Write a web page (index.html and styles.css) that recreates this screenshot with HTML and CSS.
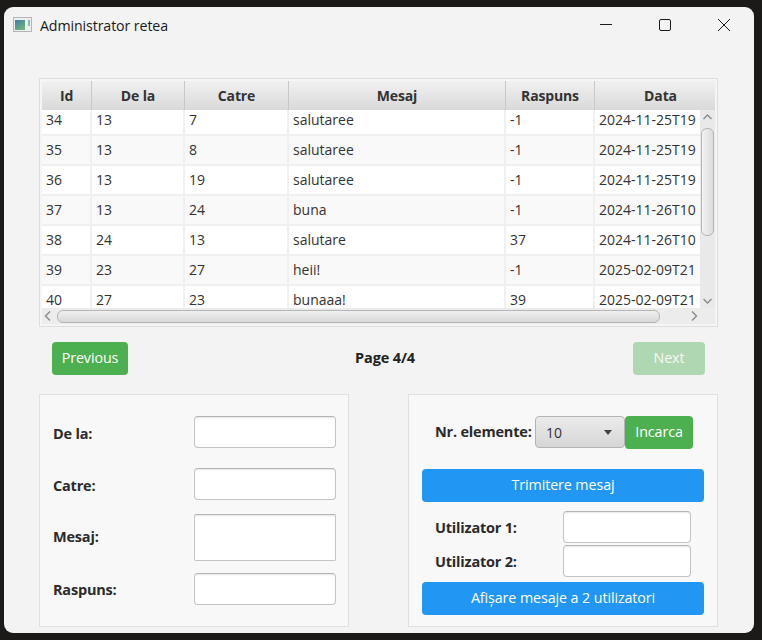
FILE: index.html
```html
<!DOCTYPE html>
<html lang="ro">
<head>
    <meta charset="UTF-8">
    <meta name="viewport" content="width=device-width, initial-scale=1.0">
    <title>Administrator retea</title>
    <link rel="stylesheet" href="styles.css">
</head>
<body>
    <div class="window">
        <div class="titlebar">
            <svg class="app-icon" width="20" height="16" viewBox="0 0 20 16">
                <defs>
                    <linearGradient id="pane" x1="0" y1="0" x2="0.6" y2="1">
                        <stop offset="0" stop-color="#3f7fa0"/>
                        <stop offset="1" stop-color="#6fb07f"/>
                    </linearGradient>
                </defs>
                <rect x="0.5" y="0.5" width="18" height="14" fill="#eceeef" stroke="#b3b6b9"/>
                <rect x="2" y="3" width="10" height="10" fill="url(#pane)"/>
                <rect x="15" y="3" width="2" height="6" fill="#8fb8b5"/>
            </svg>
            <span class="title">Administrator retea</span>
            <div class="controls">
                <svg class="ctl-min" width="14" height="14" viewBox="0 0 14 14"><path d="M1 6.5h12" stroke="#1a1a1a" fill="none"/></svg>
                <svg class="ctl-max" width="14" height="14" viewBox="0 0 14 14"><rect x="1.5" y="1.5" width="11" height="11" rx="1.5" stroke="#1a1a1a" fill="none"/></svg>
                <svg class="ctl-close" width="14" height="14" viewBox="0 0 14 14"><path d="M1 1l12 12M13 1L1 13" stroke="#1a1a1a" fill="none"/></svg>
            </div>
        </div>

        <div class="content">
            <div class="table-view">
                <div class="head">
                    <div>Id</div><div>De la</div><div>Catre</div><div>Mesaj</div><div>Raspuns</div><div class="head-data">Data</div>
                </div>
                <div class="body">
                    <div class="rows-clip">
                        <div class="rows">
                            <div class="row"><div>34</div><div>13</div><div>7</div><div>salutaree</div><div>-1</div><div>2024-11-25T19</div></div>
                            <div class="row odd"><div>35</div><div>13</div><div>8</div><div>salutaree</div><div>-1</div><div>2024-11-25T19</div></div>
                            <div class="row"><div>36</div><div>13</div><div>19</div><div>salutaree</div><div>-1</div><div>2024-11-25T19</div></div>
                            <div class="row odd"><div>37</div><div>13</div><div>24</div><div>buna</div><div>-1</div><div>2024-11-26T10</div></div>
                            <div class="row"><div>38</div><div>24</div><div>13</div><div>salutare</div><div>37</div><div>2024-11-26T10</div></div>
                            <div class="row odd"><div>39</div><div>23</div><div>27</div><div>heii!</div><div>-1</div><div>2025-02-09T21</div></div>
                            <div class="row"><div>40</div><div>27</div><div>23</div><div>bunaaa!</div><div>39</div><div>2025-02-09T21</div></div>
                        </div>
                    </div>
                    <div class="vbar">
                        <svg width="15" height="17" viewBox="0 0 15 17"><path d="M3.5 9l4-4 4 4" stroke="#8a8a8a" stroke-width="1.4" fill="none"/></svg>
                        <div class="vthumb"></div>
                        <svg class="vdown" width="15" height="17" viewBox="0 0 15 17"><path d="M3.5 8l4 4 4-4" stroke="#8a8a8a" stroke-width="1.4" fill="none"/></svg>
                    </div>
                    <div class="hbar">
                        <svg width="15" height="16" viewBox="0 0 15 16"><path d="M8 3.5L3.5 8 8 12.5" stroke="#8a8a8a" stroke-width="1.4" fill="none"/></svg>
                        <div class="hthumb"></div>
                        <svg class="hright" width="15" height="16" viewBox="0 0 15 16"><path d="M7 3.5L11.5 8 7 12.5" stroke="#8a8a8a" stroke-width="1.4" fill="none"/></svg>
                    </div>
                    <div class="corner"></div>
                </div>
            </div>

            <div class="pager">
                <button class="btn btn-green btn-prev">Previous</button>
                <span class="page-label">Page 4/4</span>
                <button class="btn btn-green btn-next">Next</button>
            </div>

            <div class="panels">
                <div class="panel panel-form">
                    <div class="form-row label-low"><label>De la:</label><input type="text"></div>
                    <div class="form-row label-low"><label>Catre:</label><input type="text"></div>
                    <div class="form-row form-row-tall"><label>Mesaj:</label><textarea></textarea></div>
                    <div class="form-row"><label>Raspuns:</label><input type="text"></div>
                </div>
                <div class="panel panel-actions">
                    <div class="load-row">
                        <label>Nr. elemente:</label>
                        <div class="combo"><span>10</span><i class="arrow"></i></div>
                        <button class="btn btn-green btn-load">Incarca</button>
                    </div>
                    <button class="btn btn-blue btn-send">Trimitere mesaj</button>
                    <div class="user-row"><label>Utilizator 1:</label><input type="text"></div>
                    <div class="user-row"><label>Utilizator 2:</label><input type="text"></div>
                    <button class="btn btn-blue btn-show">Afișare mesaje a 2 utilizatori</button>
                </div>
            </div>
        </div>
    </div>
</body>
</html>
```

FILE: styles.css
```css
* {
    box-sizing: border-box;
}

html, body {
    height: 100%;
}

body {
    margin: 0;
    padding: 7px 8px 7px 4px;
    background-color: #1c1a19;
    font-family: "Open Sans", "Noto Sans", sans-serif;
    font-size: 14px;
    color: #333;
    overflow: hidden;
}

.window {
    height: 626px;
    background: #f3f3f3;
    border-radius: 9px;
    overflow: hidden;
}

.titlebar {
    height: 38px;
    display: flex;
    align-items: center;
    padding-left: 9px;
    padding-bottom: 2px;
    color: #1a1a1a;
}

.app-icon {
    margin-right: 7px;
}

.title {
    font-size: 14.2px;
    letter-spacing: -0.1px;
}

.controls {
    margin-left: auto;
    display: flex;
    align-items: center;
    padding-right: 23px;
    gap: 45px;
}

.content {
    padding: 33px 36px 0 35px;
}

.table-view {
    width: 679px;
    height: 249px;
    background: #f5f5f5;
    border: 1px solid #dedede;
    padding: 2px;
}

.head, .row {
    display: grid;
    grid-template-columns: 50px 93px 104px 217px 89px 120px;
}

.head {
    height: 29px;
    background: linear-gradient(#f1f1f1, #d9d9d9);
    font-weight: 700;
    color: #333;
    letter-spacing: -0.15px;
}

.head div {
    display: flex;
    align-items: center;
    justify-content: center;
    border-right: 1px solid #c8c8c8;
}

.head .head-data {
    padding-left: 11px;
    border-right: 0;
}

.body {
    display: grid;
    grid-template-columns: 658px 15px;
    grid-template-rows: 198px 16px;
    height: 214px;
}

.rows-clip {
    overflow: hidden;
}

.rows {
    margin-top: -4px;
    width: 673px;
}

.row {
    height: 30px;
    background: #fff;
    border-bottom: 2px solid #f0f0f0;
}

.row.odd {
    background: #f9f9f9;
}

.row div {
    padding: 0 4px;
    line-height: 27px;
    border-right: 2px solid #f0f0f0;
    white-space: nowrap;
}

.vbar {
    display: flex;
    flex-direction: column;
    align-items: center;
    background: #e9e9e9;
}

.vthumb {
    width: 13px;
    height: 108px;
    margin-top: 1px;
    background: linear-gradient(to right, #f3f3f3, #dcdcdc);
    border: 1px solid #b5b5b5;
    border-radius: 6px;
}

.vdown {
    margin-top: auto;
}

.hbar {
    display: flex;
    align-items: center;
    background: #ececec;
}

.hthumb {
    width: 603px;
    height: 13px;
    background: linear-gradient(#f0f0f0, #d8d8d8);
    border: 1px solid #b5b5b5;
    border-radius: 6px;
}

.hright {
    margin-left: auto;
}

.corner {
    background: #ececec;
}

.pager {
    display: flex;
    align-items: center;
    justify-content: space-between;
    margin-top: 15px;
    padding: 0 13px;
    width: 679px;
}

.page-label {
    font-weight: 700;
    font-size: 14.5px;
    letter-spacing: -0.15px;
    margin-left: 9px;
    padding-bottom: 2px;
    color: #222;
}

.btn {
    height: 33px;
    border: 0;
    border-radius: 4px;
    color: #fff;
    font-family: inherit;
    font-size: 14.3px;
    letter-spacing: -0.1px;
    padding: 0 0 2px;
}

.btn-green {
    background: #4caf50;
}

.btn-blue {
    background: #2196f3;
    display: block;
    width: 282px;
}

.btn-prev {
    width: 76px;
}

.btn-next {
    width: 72px;
    opacity: 0.4;
}

.panels {
    display: flex;
    justify-content: space-between;
    width: 679px;
    margin-top: 19px;
}

.panel {
    width: 310px;
    height: 233px;
    background: #f8f8f8;
    border: 1px solid #e0e0e0;
}

label {
    font-weight: 700;
    font-size: 14.5px;
    letter-spacing: -0.2px;
    color: #2b2b2b;
}

input, textarea {
    display: block;
    background: #fff;
    border: 1px solid #c4c4c4;
    border-top-color: #b4b4b4;
    border-radius: 4px;
    box-shadow: inset 0 2px 2px -1px #e6e6e6;
    padding: 0;
    margin: 0;
    resize: none;
}

.panel-form {
    padding: 21px 12px 0 13px;
}

.form-row {
    display: flex;
    align-items: center;
    justify-content: space-between;
    height: 32px;
    margin-bottom: 20px;
}

.form-row:nth-child(2) {
    margin-bottom: 14px;
}

.label-low label {
    padding-top: 2px;
}

.form-row-tall {
    height: 47px;
    margin-bottom: 12px;
}

.form-row-tall label {
    padding-bottom: 2px;
}

.form-row input, .form-row textarea {
    width: 142px;
    height: 100%;
}

.form-row-tall textarea {
    border-radius: 2px;
}

.panel-actions {
    padding: 21px 13px 0 13px;
}

.load-row {
    display: flex;
    align-items: flex-start;
    padding-left: 13px;
    height: 33px;
}

.load-row label {
    width: 100px;
    line-height: 32px;
}

.combo {
    width: 90px;
    height: 32px;
    display: flex;
    align-items: center;
    justify-content: space-between;
    padding: 0 12px 0 10px;
    background: linear-gradient(#ebebeb, #d6d6d6);
    border: 1px solid #b4b4b4;
    border-radius: 4px;
    color: #333;
}

.arrow {
    width: 0;
    height: 0;
    border-left: 4.5px solid transparent;
    border-right: 4.5px solid transparent;
    border-top: 5px solid #444;
}

.btn-load {
    width: 68px;
}

.btn-send {
    margin-top: 20px;
    margin-bottom: 9px;
}

.user-row {
    display: flex;
    align-items: center;
    padding-left: 13px;
    height: 32px;
    margin-bottom: 2px;
}

.user-row label {
    width: 128px;
}

.user-row input {
    width: 128px;
    height: 32px;
}

.btn-show {
    margin-top: 5px;
}
```
